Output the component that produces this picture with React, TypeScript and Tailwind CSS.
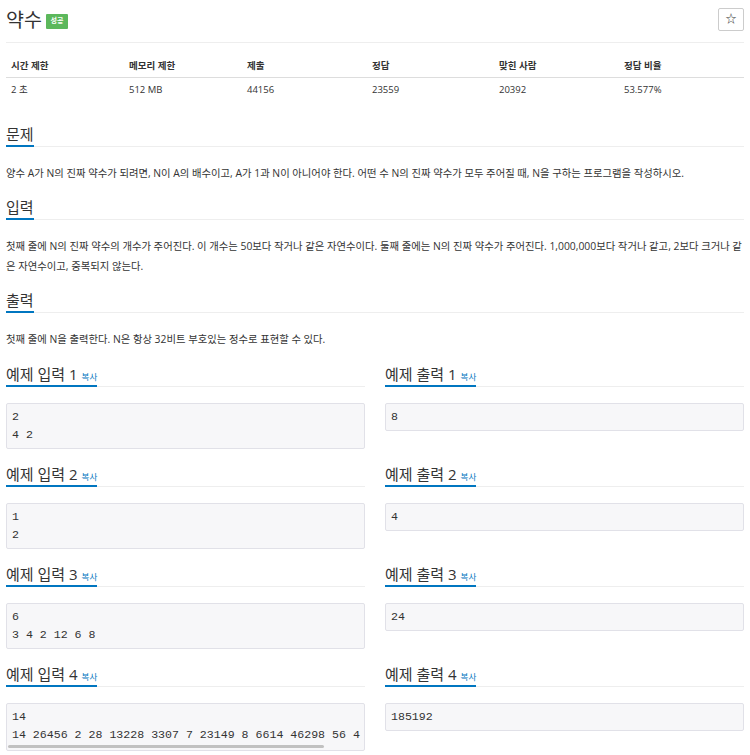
import React from "react";

const FONT = "font-['Open_Sans','Noto_Sans_CJK_KR',sans-serif]";
const MONO = "font-['Liberation_Mono','DejaVu_Sans_Mono',monospace]";

function Headline({ title, copy }: { title: string; copy?: boolean }) {
  return (
    <div className="flex border-b border-[#eee]">
      <div className="flex items-baseline border-b-2 border-[#0076c0] -mb-px">
        <span className="text-[15px] leading-[22px] text-[#333]">{title}</span>
        {copy && <span className="ml-[4px] text-[8.5px] text-[#0076c0]">복사</span>}
      </div>
    </div>
  );
}

function SampleBox({ lines, scroll }: { lines: string[]; scroll?: boolean }) {
  return (
    <div className="mt-[16px] border border-[#e1e1e8] bg-[#f7f7f9] rounded-[2px] overflow-hidden">
      <div className={`${MONO} text-[11.6px] leading-[18px] text-[#333] px-[5px] py-[4px] whitespace-pre`}>
        {lines.map((l, i) => (
          <div key={i}>{l}</div>
        ))}
      </div>
      {scroll && (
        <div className="h-[5px] px-[1px] pb-[2px] -mt-[3px]">
          <div className="h-[3px] w-[316px] rounded-full bg-[#c1c1c1]" />
        </div>
      )}
    </div>
  );
}

const samples = [
  { inp: ["2", "4 2"], out: ["8"] },
  { inp: ["1", "2"], out: ["4"] },
  { inp: ["6", "3 4 2 12 6 8"], out: ["24"] },
  {
    inp: ["14", "14 26456 2 28 13228 3307 7 23149 8 6614 46298 56 4"],
    out: ["185192"],
    scroll: true,
  },
];

export default function App() {
  const heads = ["시간 제한", "메모리 제한", "제출", "정답", "맞힌 사람", "정답 비율"];
  const vals = ["2 초", "512 MB", "44156", "23559", "20392", "53.577%"];
  return (
    <div className={`${FONT} w-[750px] min-h-[755px] bg-white px-[6px] text-[#333]`}>
      {/* title row */}
      <div className="flex justify-between items-start h-[43px] border-b border-[#eee]">
        <div className="flex items-center mt-[6px]">
          <span className="text-[19.5px] leading-[28px] text-[#333]">약수</span>
          <span className="ml-[4px] mt-[3px] inline-flex items-center justify-center w-[22px] h-[15px] bg-[#5cb85c] text-white text-[7px] font-bold rounded-[1px]">
            성공
          </span>
        </div>
        <div className="mt-[8px] w-[26px] h-[23px] border border-[#ccc] rounded-[2px] flex items-center justify-center text-[11px] text-[#333]">
          ☆
        </div>
      </div>

      {/* info table */}
      <div className="mt-[13px] text-[9.5px]">
        <div className="grid grid-cols-[118px_118px_125px_127px_125px_125px] h-[22px] items-center border-b border-[#ddd] font-bold">
          {heads.map((h) => (
            <div key={h} className="pl-[5px]">{h}</div>
          ))}
        </div>
        <div className="grid grid-cols-[118px_118px_125px_127px_125px_125px] h-[24px] items-center">
          {vals.map((v) => (
            <div key={v} className="pl-[5px]">{v}</div>
          ))}
        </div>
      </div>

      {/* 문제 */}
      <div className="mt-[21px]">
        <Headline title="문제" />
        <p className="mt-[16px] text-[10.35px] leading-[20px]">
          양수 A가 N의 진짜 약수가 되려면, N이 A의 배수이고, A가 1과 N이 아니어야 한다. 어떤 수 N의 진짜 약수가 모두 주어질 때, N을 구하는 프로그램을 작성하시오.
        </p>
      </div>

      {/* 입력 */}
      <div className="mt-[13px]">
        <Headline title="입력" />
        <p className="mt-[16px] text-[10.35px] leading-[20px]">
          첫째 줄에 N의 진짜 약수의 개수가 주어진다. 이 개수는 50보다 작거나 같은 자연수이다. 둘째 줄에는 N의 진짜 약수가 주어진다. 1,000,000보다 작거나 같고, 2보다 크거나 같은 자연수이고, 중복되지 않는다.
        </p>
      </div>

      {/* 출력 */}
      <div className="mt-[13px]">
        <Headline title="출력" />
        <p className="mt-[16px] text-[10.35px] leading-[20px]">
          첫째 줄에 N을 출력한다. N은 항상 32비트 부호있는 정수로 표현할 수 있다.
        </p>
      </div>

      {/* samples */}
      <div className="mt-[14px] grid grid-cols-2 gap-x-[20px] gap-y-[14px]">
        {samples.map((s, i) => (
          <React.Fragment key={i}>
            <div>
              <Headline title={`예제 입력 ${i + 1}`} copy />
              <SampleBox lines={s.inp} scroll={s.scroll} />
            </div>
            <div>
              <Headline title={`예제 출력 ${i + 1}`} copy />
              <SampleBox lines={s.out} />
            </div>
          </React.Fragment>
        ))}
      </div>
    </div>
  );
}
